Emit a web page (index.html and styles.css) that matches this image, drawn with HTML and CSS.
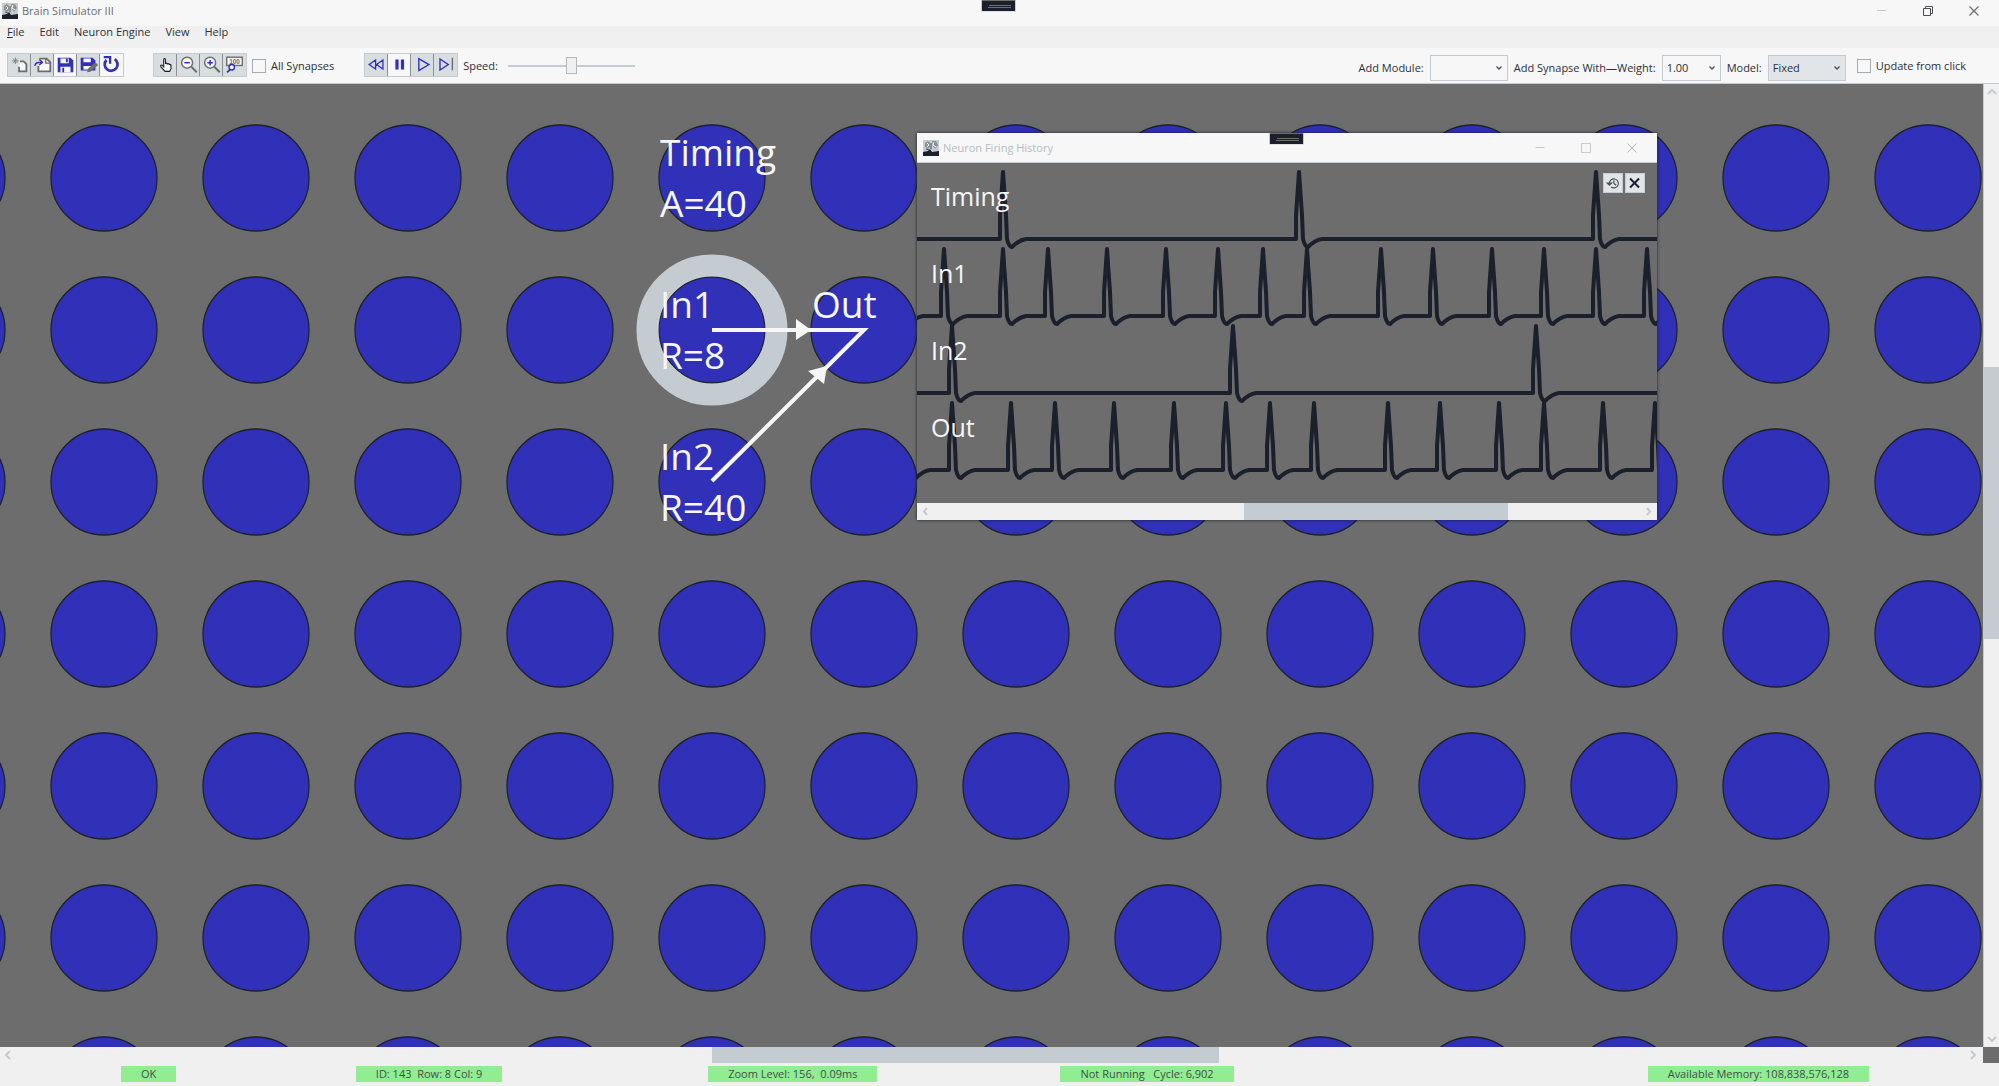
FILE: index.html
```html
<!DOCTYPE html>
<html lang="en">
<head>
<meta charset="utf-8">
<title>Brain Simulator III</title>
<link rel="stylesheet" href="styles.css">
</head>
<body>
<svg class="defs" width="0" height="0" aria-hidden="true">
  <symbol id="app-icon" viewBox="0 0 16 16">
    <rect width="16" height="16" fill="#c4ccd2"/>
    <path d="M2 3l3-2 2 2v4l-2 2-3-2zM9 1h4l2 4-3 4-2-3z" fill="#8b9196"/>
    <path d="M4 3l2 2-2 2M11 2l-1 3 3 2" fill="none" stroke="#f7f7f7"/>
    <path d="M8 3v6M3 9l3 1" stroke="#4a4f57"/>
    <path d="M0 12l5-1 2-2 2 3 7-1v5H0z" fill="#1b202c"/>
  </symbol>
  <symbol id="grip" viewBox="0 0 35 12">
    <path d="M0 0h35v11.500H0z" fill="#c4ccd2"/>
    <path d="M1 0h33v11H1z" fill="#1b202c"/>
    <path d="M1 .5h33M8 5.500h22M7 7.500h23" stroke="#6d6d6d"/>
  </symbol>
  <symbol id="chevron" viewBox="0 0 8 8"><path d="M1.500 2.500L4 5l2.500-2.500" fill="none" stroke="#4a4f57" stroke-width="1.300"/></symbol>
</svg>
<header>
  <div class="titlebar">
    <svg class="app-icon"><use href="#app-icon"/></svg>
    <span class="title">Brain Simulator III</span>
    <svg class="grip"><use href="#grip"/></svg>
    <div class="caption">
      <button aria-label="Minimize"><svg viewBox="0 0 12 12"><path d="M1 5.500h9" stroke="#c4ccd2"/></svg></button>
      <button aria-label="Restore"><svg viewBox="0 0 12 12"><path d="M1.500 3.500h7v7h-7zM3.500 3V1.500h7v7H9" fill="none" stroke="#4a4f57"/></svg></button>
      <button aria-label="Close"><svg viewBox="0 0 12 12"><path d="M1.500 1.500l9 9M10.500 1.500l-9 9" stroke="#6d6d6d" stroke-width="1.200"/></svg></button>
    </div>
  </div>
  <nav class="menu">
    <a href="#"><u>F</u>ile</a><a href="#">Edit</a><a href="#">Neuron Engine</a><a href="#">View</a><a href="#">Help</a>
  </nav>
  <div class="toolbar">
    <div class="group">
      <button aria-label="New"><svg viewBox="0 0 23 24"><path d="M7 4v7M3.500 7.500h7M4.500 5l5 5M9.500 5l-5 5" stroke="#7b8478"/><path d="M12 8h4l3 3v8h-8v-5" fill="#f7f7f7" stroke="#6d6d6d" stroke-width="2"/></svg></button>
      <button aria-label="Open"><svg viewBox="0 0 23 24"><path d="M8 5h8l4 4v10H7v-6" fill="#f7f7f7" stroke="#6d6d6d" stroke-width="2"/><path d="M15 5v5h5" fill="none" stroke="#6d6d6d" stroke-width="1.500"/><path d="M3 13c1-4 3-4 8-4M8 6l3.500 3L8 12" fill="none" stroke="#3030b8" stroke-width="1.600"/></svg></button>
      <button class="lit" aria-label="Save"><svg viewBox="0 0 23 24"><path d="M3 4h14l3 3v13H3z" fill="#3030b8"/><path d="M6 5h9v5H6zM6 14h11v6H6z" fill="#f7f7f7"/><path d="M12 5h2v4h-2zM8 15h2v5H8z" fill="#3030b8"/></svg></button>
      <button aria-label="Save as"><svg viewBox="0 0 23 24"><path d="M3 4h13l3 3v11H3z" fill="#3030b8"/><path d="M6 5h8v4H6zM6 13h9v4H6z" fill="#f7f7f7"/><path d="M10 20l1-4 8-7 3 3-8 7z" fill="#6d6d6d"/></svg></button>
      <button class="lit" aria-label="Reload"><svg viewBox="0 0 23 24"><path d="M15 5.500a7 7 0 1 1-9 1" fill="none" stroke="#3030b8" stroke-width="3"/><path d="M3 3.500h7v7" fill="none" stroke="#3030b8" stroke-width="2.500"/></svg></button>
    </div>
    <div class="group group-view">
      <button aria-label="Pan"><svg viewBox="0 0 23 24"><path d="M9.500 14V6.500c0-2 2-2 2 0V11c0-1.500 2-1.500 2 .5 0-1.500 2-1.500 2 .5 0-1 2-1 2 .5v3.500l-1.500 3h-5L6.500 14c-1-1.500.5-2.500 1.500-1.500z" fill="#f7f7f7" stroke="#1b202c" stroke-width="1.200"/></svg></button>
      <button aria-label="Zoom out"><svg viewBox="0 0 23 24"><circle cx="10" cy="9.500" r="6" fill="#f7f7f7" stroke="#6d6d6d" stroke-width="1.600"/><path d="M14.500 14l6 6" stroke="#6d6d6d" stroke-width="2.200"/><path d="M7 9.500h6" stroke="#3030b8" stroke-width="1.600"/></svg></button>
      <button aria-label="Zoom in"><svg viewBox="0 0 23 24"><circle cx="10" cy="9.500" r="6" fill="#f7f7f7" stroke="#6d6d6d" stroke-width="1.600"/><path d="M14.500 14l6 6" stroke="#6d6d6d" stroke-width="2.200"/><path d="M7 9.500h6M10 6.500v6" stroke="#3030b8" stroke-width="1.600"/></svg></button>
      <button aria-label="Zoom to 100"><svg viewBox="0 0 23 24"><rect x="3" y="3.500" width="17" height="9" fill="#f7f7f7" stroke="#6d6d6d" stroke-width="1.500"/><text x="11.500" y="11" class="tiny" text-anchor="middle">100</text><circle cx="8.500" cy="14.500" r="3" fill="#f7f7f7" stroke="#3030b8" stroke-width="1.500"/><path d="M6.500 17L3.500 20" stroke="#3030b8" stroke-width="2"/></svg></button>
    </div>
    <label class="check"><input type="checkbox"><span>All Synapses</span></label>
    <div class="group group-run">
      <button aria-label="Rewind"><svg viewBox="0 0 23 24"><path d="M10.500 6.500v10l-7-5zM18.500 6.500v10l-7-5z" fill="none" stroke="#3030b8" stroke-width="1.400"/></svg></button>
      <button class="lit" aria-label="Pause"><svg viewBox="0 0 23 24"><path d="M7 6h3.500v11H7zM13 6h3.500v11H13z" fill="#3030b8"/></svg></button>
      <button aria-label="Play"><svg viewBox="0 0 23 24"><path d="M7.500 5v13l11-6.500z" fill="none" stroke="#3030b8" stroke-width="1.500"/></svg></button>
      <button aria-label="Step"><svg viewBox="0 0 23 24"><path d="M5.500 5.500v12l9-6z" fill="none" stroke="#3030b8" stroke-width="1.500"/><path d="M19 4v14" stroke="#6d6d6d" stroke-width="1.500"/></svg></button>
    </div>
    <label class="speed"><span>Speed:</span><input type="range" min="0" max="10" value="5"></label>
    <div class="options">
      <label class="field"><span>Add Module:</span><span class="combo"><select class="wide"><option></option></select><svg><use href="#chevron"/></svg></span></label>
      <label class="field"><span>Add Synapse With—Weight:</span><span class="combo"><select class="narrow"><option>1.00</option></select><svg><use href="#chevron"/></svg></span></label>
      <label class="field"><span>Model:</span><span class="combo"><select class="wide shaded"><option>Fixed</option></select><svg><use href="#chevron"/></svg></span></label>
      <label class="check"><input type="checkbox"><span>Update from click</span></label>
    </div>
  </div>
</header>
<main>
  <div class="canvas">
    <svg class="neurons">
      <defs>
        <pattern id="cells" x="28" y="18" width="152" height="152" patternUnits="userSpaceOnUse">
          <circle cx="76" cy="76" r="53" fill="#3030b8" stroke="#1b202c" stroke-width="1.300"/>
        </pattern>
      </defs>
      <rect width="100%" height="100%" fill="url(#cells)"/>
      <circle cx="712" cy="246" r="64.500" fill="none" stroke="#c4ccd2" stroke-width="22"/>
      <g class="labels">
        <text x="660" y="82">Timing</text><text x="660" y="133">A=40</text>
        <text x="660" y="234">In1</text><text x="660" y="285">R=8</text>
        <text x="812" y="234">Out</text>
        <text x="660" y="386">In2</text><text x="660" y="437">R=40</text>
      </g>
      <path d="M712 246h152L712 397" fill="none" stroke="#f7f7f7" stroke-width="4"/>
      <path d="M796 235l15 11-15 10zM808 287l19-5-3 18z" fill="#f7f7f7"/>
    </svg>
    <section class="history">
      <div class="history-title">
        <svg class="app-icon"><use href="#app-icon"/></svg>
        <span>Neuron Firing History</span>
        <svg class="grip"><use href="#grip"/></svg>
        <div class="caption">
          <button aria-label="Minimize"><svg viewBox="0 0 12 12"><path d="M1.500 5.500h9" stroke="#c4ccd2"/></svg></button>
          <button aria-label="Maximize"><svg viewBox="0 0 12 12"><path d="M1.500 1.500h9v9h-9z" fill="none" stroke="#c4ccd2"/></svg></button>
          <button aria-label="Close"><svg viewBox="0 0 12 12"><path d="M1.500 1.500l9 9M10.500 1.500l-9 9" stroke="#aeb6ba"/></svg></button>
        </div>
      </div>
      <div class="plot">
        <svg class="traces" id="traces"></svg>
        <div class="plot-tools">
          <button aria-label="Reset history"><svg viewBox="0 0 20 20"><path d="M6 11a5 5 0 1 1 2 3.500M3.500 10h5L6 12.500zM11 7v3.500l2.500 2" fill="none" stroke="#4a4f57" stroke-width="1.300"/></svg></button>
          <button aria-label="Clear"><svg viewBox="0 0 20 20"><path d="M4.500 5l10 10M14.500 5l-10 10" stroke="#1b202c" stroke-width="2.200"/></svg></button>
        </div>
      </div>
      <div class="hbar hbar-small">
        <svg viewBox="0 0 16 16"><path d="M10 5L7 8.500l3 3.500" fill="none" stroke="#c4ccd2" stroke-width="2"/></svg>
        <div class="track"><div class="thumb"></div></div>
        <svg viewBox="0 0 16 16"><path d="M6 5l3 3.500L6 12" fill="none" stroke="#c4ccd2" stroke-width="2"/></svg>
      </div>
    </section>
  </div>
  <div class="vbar">
    <svg viewBox="0 0 16 16"><path d="M4 10l4-4 4 4" fill="none" stroke="#c4ccd2" stroke-width="2"/></svg>
    <div class="track"><div class="thumb"></div></div>
    <svg viewBox="0 0 16 16"><path d="M4 6l4 4 4-4" fill="none" stroke="#c4ccd2" stroke-width="2"/></svg>
  </div>
  <div class="hbar">
    <svg viewBox="0 0 16 16"><path d="M10 4L6 8l4 4" fill="none" stroke="#c4ccd2" stroke-width="2"/></svg>
    <div class="track"><div class="thumb"></div></div>
    <svg viewBox="0 0 16 16"><path d="M4 4l4 4-4 4" fill="none" stroke="#c4ccd2" stroke-width="2"/></svg>
  </div>
</main>
<footer>
  <span>OK</span><span>ID: 143&nbsp; Row: 8 Col: 9</span><span>Zoom Level: 156,&nbsp; 0.09ms</span><span>Not Running &nbsp; Cycle: 6,902</span><span>Available Memory: 108,838,576,128</span>
</footer>
<script src="traces.js"></script>
</body>
</html>
```
FILE: styles.css
```css
* { box-sizing: border-box; }
body {
  margin: 0;
  height: 100vh;
  display: flex;
  flex-direction: column;
  background: #f7f7f7;
  color: #2b3038;
  font: 11px/16px "Open Sans", "Noto Sans", sans-serif;
  overflow: hidden;
}
button { padding: 0; border: 0; background: none; }
.defs { position: absolute; }
.app-icon { width: 16px; height: 16px; flex: none; }
.grip { position: absolute; top: 0; left: 50%; width: 35px; height: 12px; }

.titlebar { position: relative; display: flex; align-items: center; height: 26px; padding: 0 2px 4px; gap: 4px; }
.titlebar .title { color: #6d6d6d; }
.titlebar .grip { margin-left: -19px; }
.caption { display: flex; align-self: flex-start; margin-left: auto; }
.caption button { width: 46px; height: 22px; display: grid; place-items: center; }
.caption svg { width: 12px; height: 12px; }

.menu { display: flex; height: 22px; padding: 0 7px; gap: 15px; background: #f0f0f0; line-height: 12px; }
.menu a { color: #2b3038; text-decoration: none; }

.toolbar { display: flex; align-items: flex-start; height: 36px; padding: 5px 29px 0 7px; border-bottom: 1px solid #c4ccd2; }
.toolbar label { display: flex; align-items: center; height: 25px; white-space: nowrap; }
.group { display: flex; border: 1px solid #c4ccd2; }
.group button { width: 23px; height: 22px; background: #d8dddf; border-right: 1px solid #8b9094; }
.group button:last-child { border-right: 0; }
.group button.lit { background: #f7f7f7; }
.group svg { display: block; width: 23px; height: 22px; }
.group-view { margin-left: 29px; margin-right: 5px; }
.group-run { margin-left: 30px; }
.tiny { font-size: 7px; font-weight: 700; fill: #6d6d6d; }
.check { gap: 5px; }
input[type="checkbox"] { appearance: none; width: 14px; height: 14px; margin: 0; border: 1px solid #a4acb1; background: #f7f7f7; }
.speed { gap: 10px; margin-left: 5px; }
input[type="range"] { appearance: none; width: 127px; height: 18px; margin: 0; background: linear-gradient(#c4ccd2, #c4ccd2) center / 100% 2px no-repeat; }
input[type="range"]::-webkit-slider-runnable-track { height: 18px; }
input[type="range"]::-webkit-slider-thumb { appearance: none; width: 11px; height: 17px; border: 1px solid #b0b9bf; background: #f0f0f0; }
.options { display: flex; gap: 6px; margin-left: auto; padding-top: 2px; }
.options .field { gap: 6px; }
.options .check { margin-left: 5px; padding-right: 4px; height: 22px; }
.combo { display: grid; align-items: center; }
.combo > * { grid-area: 1 / 1; }
.combo svg { width: 8px; height: 8px; justify-self: end; margin-right: 5px; pointer-events: none; }
select { appearance: none; height: 26px; border: 1px solid #c4ccd2; border-radius: 0; background: #f7f7f7; padding: 0 4px; color: inherit; font: inherit; }
select.wide { width: 78px; }
select.narrow { width: 59px; }
select.shaded { background: #e2e5e7; }

main { flex: 1; min-height: 0; display: grid; grid-template: 1fr 16px / 1fr 16px; background: #6d6d6d; }
.canvas { position: relative; overflow: hidden; }
.neurons { display: block; width: 100%; height: 100%; }
.labels { font-size: 37px; fill: #f7f7f7; }

.vbar, .hbar { display: flex; background: #f0f0f0; }
.vbar { flex-direction: column; border-left: 1px solid #c4ccd2; }
.vbar svg, .hbar svg { width: 16px; height: 16px; flex: none; }
.vbar .track, .hbar .track { flex: 1; display: flex; }
.vbar .track { flex-direction: column; }
.thumb { background: #c4ccd2; }
.vbar .thumb { height: 272px; margin-top: 267px; }
.hbar .thumb { width: 26%; margin-left: 696px; }

.history { position: absolute; left: 917px; top: 49px; width: 740px; background: #6d6d6d; box-shadow: 0 0 3px #1b202c; }
.history-title { position: relative; display: flex; align-items: center; gap: 4px; height: 30px; padding: 0 2px 0 6px; background: #f7f7f7; border-bottom: 1px solid #c4ccd2; color: #b4bcc1; }
.history-title .grip { margin-left: -18px; }
.history-title .caption button { height: 29px; }
.plot { position: relative; height: 340px; }
.traces { display: block; width: 100%; height: 100%; }
.traces path { fill: none; stroke: #1b202c; stroke-width: 4; stroke-linejoin: round; }
.traces text { font-size: 25px; fill: #f7f7f7; }
.plot-tools { position: absolute; top: 10px; right: 12px; display: flex; gap: 2px; }
.plot-tools button { width: 20px; height: 20px; background: #e2e5e7; border: 1px solid #c4ccd2; }
.plot-tools svg { display: block; width: 18px; height: 18px; }
.hbar-small { height: 17px; }
.hbar-small .thumb { width: 264px; margin-left: 311px; }

footer { display: grid; grid-template-columns: 2fr 3fr 3fr 5fr 3fr; justify-items: start; align-items: start; height: 23px; padding: 3px 0 0 6%; background: #f0f0f0; }
footer span { padding: 0 20px; margin-left: 1px; background: #90ee90; color: #40504a; }
```
FILE: traces.js
```js
// Peak positions of each neuron's spikes, in plot pixels.
const rows = [
  ["Timing", [86, 382, 679]],
  ["In1", [-17, 27, 86, 131, 190, 249, 301, 346, 390, 464, 516, 575, 627, 679, 730]],
  ["In2", [35, 316, 619]],
  ["Out", [-10, 35, 94, 138, 197, 257, 309, 353, 397, 471, 523, 582, 627, 686, 738]],
];
const svg = document.getElementById("traces");
const add = (name, attrs, text) => {
  const el = document.createElementNS("http://www.w3.org/2000/svg", name);
  for (const key in attrs) el.setAttribute(key, attrs[key]);
  if (text) el.textContent = text;
  svg.append(el);
};
rows.forEach(([, peaks], i) => {
  const base = 76 + i * 77;
  let d = `M-30 ${base}`;
  for (const x of peaks) {
    d += `H${x - 3}V${base - 24}L${x} ${base - 67}L${x + 3} ${base - 24}L${x + 4} ${base}` +
      `Q${x + 6} ${base + 8} ${x + 9} ${base + 8}Q${x + 16} ${base + 1} ${x + 23} ${base}`;
  }
  add("path", { d: d + "H780" });
});
rows.forEach(([label], i) => add("text", { x: 14, y: 43 + i * 77 }, label));
```
